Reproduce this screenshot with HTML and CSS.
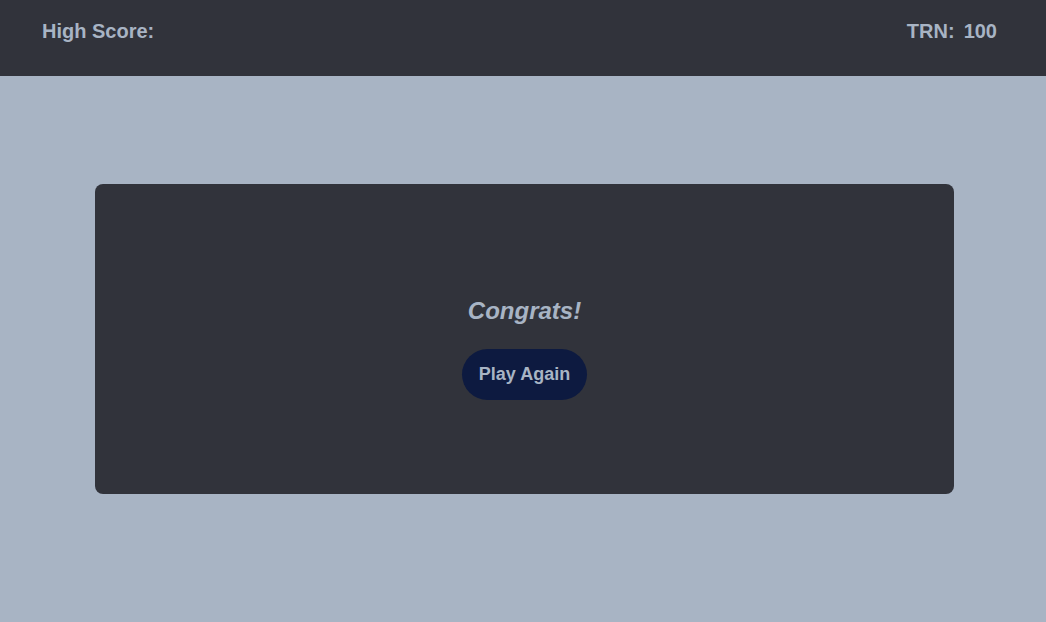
FILE: index.html
```html
<!DOCTYPE html>
<html lang="en">
<head>
<meta charset="utf-8">
<title>Game</title>
<link rel="stylesheet" href="styles.css">
</head>
<body>
<header class="topbar">
  <div class="stat">High Score:</div>
  <div class="stat stat-right"><span>TRN:</span><span>100</span></div>
</header>
<main class="stage">
  <section class="card">
    <h2 class="congrats">Congrats!</h2>
    <button class="play-btn">Play Again</button>
  </section>
</main>
</body>
</html>
```
FILE: styles.css
```css
* { box-sizing: border-box; }
html, body {
  margin: 0;
  height: 100%;
}
body {
  background: #a8b4c4;
  font-family: "Liberation Sans", Arial, sans-serif;
  color: #a8b4c4;
}
.topbar {
  height: 76px;
  background: #31333b;
  display: flex;
  justify-content: space-between;
  align-items: flex-start;
  padding: 19px 49px 0 42px;
}
.stat {
  font-weight: bold;
  font-size: 20px;
  line-height: 24px;
}
.stat-right {
  display: flex;
  gap: 9px;
}
.stage {
  padding-top: 108px;
  padding-left: 95px;
}
.card {
  width: 859px;
  height: 310px;
  background: #31333b;
  border-radius: 8px;
  display: flex;
  flex-direction: column;
  align-items: center;
  padding-top: 113px;
}
.congrats {
  margin: 0;
  font-size: 24px;
  font-style: italic;
  font-weight: bold;
  line-height: 28px;
  color: #a8b4c4;
}
.play-btn {
  margin-top: 24px;
  height: 51px;
  padding: 0 17px;
  border: none;
  border-radius: 26px;
  background: #0d1a40;
  color: #a8b4c4;
  font-family: "Liberation Sans", Arial, sans-serif;
  font-weight: bold;
  font-size: 18px;
  cursor: pointer;
}
```
